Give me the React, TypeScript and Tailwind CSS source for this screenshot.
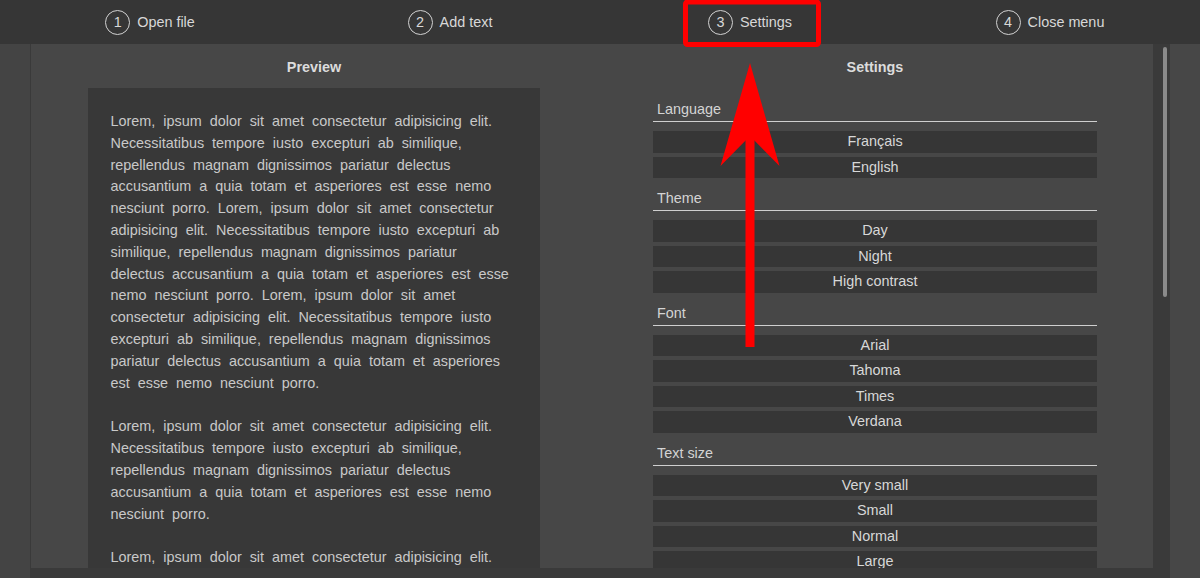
const steps = ["Open file", "Add text", "Settings", "Close menu"];

const paragraphs: string[][] = [
  [
    "Lorem, ipsum dolor sit amet consectetur adipisicing elit.",
    "Necessitatibus tempore iusto excepturi ab similique,",
    "repellendus magnam dignissimos pariatur delectus",
    "accusantium a quia totam et asperiores est esse nemo",
    "nesciunt porro. Lorem, ipsum dolor sit amet consectetur",
    "adipisicing elit. Necessitatibus tempore iusto excepturi ab",
    "similique, repellendus magnam dignissimos pariatur",
    "delectus accusantium a quia totam et asperiores est esse",
    "nemo nesciunt porro. Lorem, ipsum dolor sit amet",
    "consectetur adipisicing elit. Necessitatibus tempore iusto",
    "excepturi ab similique, repellendus magnam dignissimos",
    "pariatur delectus accusantium a quia totam et asperiores",
    "est esse nemo nesciunt porro.",
  ],
  [
    "Lorem, ipsum dolor sit amet consectetur adipisicing elit.",
    "Necessitatibus tempore iusto excepturi ab similique,",
    "repellendus magnam dignissimos pariatur delectus",
    "accusantium a quia totam et asperiores est esse nemo",
    "nesciunt porro.",
  ],
  [
    "Lorem, ipsum dolor sit amet consectetur adipisicing elit.",
    "Necessitatibus tempore iusto excepturi ab similique,",
    "repellendus magnam dignissimos pariatur delectus",
  ],
];

const sections = [
  { label: "Language", options: ["Français", "English"] },
  { label: "Theme", options: ["Day", "Night", "High contrast"] },
  { label: "Font", options: ["Arial", "Tahoma", "Times", "Verdana"] },
  { label: "Text size", options: ["Very small", "Small", "Normal", "Large", "Very large"] },
];

function Step({ n, label }: { n: number; label: string }) {
  return (
    <div className="flex flex-1 items-center justify-center gap-[7px] pt-[1px]">
      <span className="flex h-[25px] w-[25px] items-center justify-center rounded-full border-[1.5px] border-[#d2d2d2] leading-none">
        {n}
      </span>
      <span>{label}</span>
    </div>
  );
}

export default function App() {
  return (
    <div className="relative h-[578px] w-[1200px] overflow-hidden bg-[#444444] font-['Liberation_Sans',Arial,sans-serif] text-[14.4px] text-[#d8d8d8]">
      {/* Top step bar */}
      <nav className="flex h-[44px] bg-[#363636]">
        {steps.map((s, i) => (
          <Step key={s} n={i + 1} label={s} />
        ))}
      </nav>

      <div className="flex h-[534px]">
        <div className="w-[31px] border-r border-[#3a3a3a] bg-[#444444]" />

        <div className="flex w-[1139px] flex-col bg-[#3a3a3a]">
          <div className="flex h-[524px]">
            <main className="grid w-[1122px] grid-cols-2 overflow-hidden bg-[#474747] pt-[12.5px]">
              {/* Preview column */}
              <section className="ml-[57px] w-[452px]">
                <h2 className="mb-[11.5px] text-center font-bold leading-[20px] text-[#dcdcdc]">Preview</h2>
                <div className="bg-[#383838] px-[22.5px] pt-[23px] pb-[22px] text-[#c9c9c9] [word-spacing:4px]">
                  {paragraphs.map((lines, pi) => (
                    <div key={pi} className="mb-[22px]">
                      {lines.map((line, li) => (
                        <div key={li} className="whitespace-nowrap leading-[21.8px]">
                          {line}
                        </div>
                      ))}
                    </div>
                  ))}
                </div>
              </section>

              {/* Settings column */}
              <section className="ml-[61px] w-[444px]">
                <h2 className="text-center font-bold leading-[20px] text-[#dcdcdc]">Settings</h2>
                <div className="mt-[22.5px] flex flex-col gap-[10px]">
                  {sections.map((sec) => (
                    <div key={sec.label}>
                      <div className="h-[23px] border-b border-[#cfcfcf] pl-[4px] leading-[21px] text-[#d4d4d4]">
                        {sec.label}
                      </div>
                      <div className="mt-[9px] flex flex-col gap-[4px]">
                        {sec.options.map((o) => (
                          <div key={o} className="h-[21.5px] bg-[#363636] text-center leading-[21.5px] text-[#d8d8d8]">
                            {o}
                          </div>
                        ))}
                      </div>
                    </div>
                  ))}
                </div>
              </section>
            </main>

            {/* Scrollbar */}
            <div className="w-[17px] bg-[#3a3a3a] pt-[3px]">
              <div className="ml-[10px] h-[250px] w-[4px] rounded-full bg-[#8a8a8a]" />
            </div>
          </div>
          <div className="h-[10px]" />
        </div>

        <div className="flex-1 bg-[#474747]" />
      </div>

      {/* Annotation overlay */}
      <svg className="pointer-events-none absolute inset-0" width="1200" height="578" viewBox="0 0 1200 578">
        <rect x="685.5" y="2" width="133" height="42.5" rx="2" fill="none" stroke="#ff0000" strokeWidth="5" />
        <polygon points="750,63 779.5,166 750,136 720.5,166" fill="#ff0000" />
        <rect x="745.5" y="134" width="9" height="213" fill="#ff0000" />
      </svg>
    </div>
  );
}
